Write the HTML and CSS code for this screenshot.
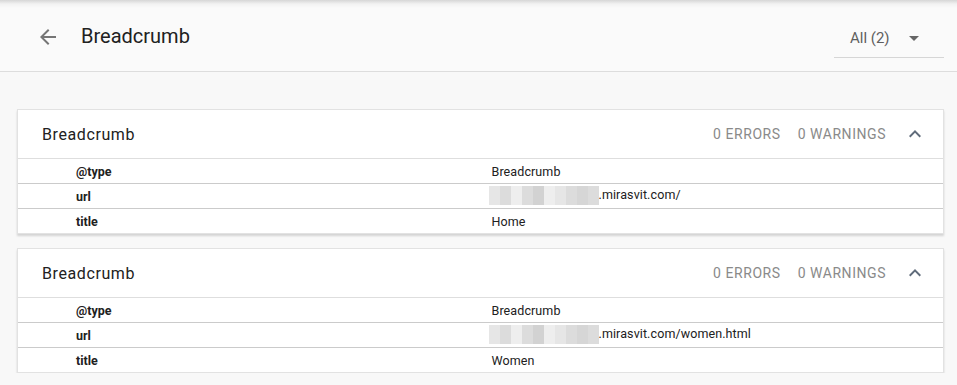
FILE: index.html
```html
<!DOCTYPE html>
<html lang="en">
<head>
    <meta charset="UTF-8">
    <title>Breadcrumb</title>
    <link rel="stylesheet" href="styles.css">
</head>
<body>
    <div class="topbar">
        <svg class="back" width="24" height="24" viewBox="0 0 24 24"><path d="M20 11H7.83l5.59-5.59L12 4l-8 8 8 8 1.41-1.41L7.83 13H20v-2z" fill="#757575"/></svg>
        <h1>Breadcrumb</h1>
        <div class="select">
            <span>All (2)</span>
            <span class="caret"></span>
        </div>
    </div>

    <div class="main">
        <div class="card">
            <div class="card-head">
                <div class="card-title">Breadcrumb</div>
                <div class="count">0 errors</div>
                <div class="count">0 warnings</div>
                <svg class="chev" width="24" height="24" viewBox="0 0 24 24"><path d="M7.41 15.41L12 10.83l4.59 4.58L18 14l-6-6-6 6z" fill="#5f6b7a"/></svg>
            </div>
            <div class="row"><div class="key">@type</div><div class="val">Breadcrumb</div></div>
            <div class="row"><div class="key">url</div><div class="val"><span class="blur"><i></i><i></i><i></i><i></i><i></i><i></i><i></i><i></i><i></i><i></i></span>.mirasvit.com/</div></div>
            <div class="row"><div class="key">title</div><div class="val">Home</div></div>
        </div>

        <div class="card">
            <div class="card-head">
                <div class="card-title">Breadcrumb</div>
                <div class="count">0 errors</div>
                <div class="count">0 warnings</div>
                <svg class="chev" width="24" height="24" viewBox="0 0 24 24"><path d="M7.41 15.41L12 10.83l4.59 4.58L18 14l-6-6-6 6z" fill="#5f6b7a"/></svg>
            </div>
            <div class="row"><div class="key">@type</div><div class="val">Breadcrumb</div></div>
            <div class="row"><div class="key">url</div><div class="val"><span class="blur"><i></i><i></i><i></i><i></i><i></i><i></i><i></i><i></i><i></i><i></i></span>.mirasvit.com/women.html</div></div>
            <div class="row"><div class="key">title</div><div class="val">Women</div></div>
        </div>
    </div>
</body>
</html>
```

FILE: styles.css
```css
body { margin: 0; font-family: Roboto, "Liberation Sans", sans-serif; background-color: #f8f8f8; color: #212121; }

.topbar {
    height: 71px;
    display: flex;
    align-items: center;
    padding: 0 13px 0 36px;
    background: linear-gradient(#d6d6d6, #f2f2f2 4px, #fafafa 8px);
    border-bottom: 1px solid #dddddd;
}
.back { margin-top: 2px; }
.topbar h1 { font-size: 20px; font-weight: 400; margin: 0 0 0 21px; flex: 1; color: #212121; }
.select {
    width: 110px;
    height: 32px;
    box-sizing: border-box;
    margin-top: 12px;
    padding: 0 0 0 16px;
    display: flex;
    align-items: center;
    border-bottom: 1px solid #d6d6d6;
    font-size: 15px;
    color: #5f5f5f;
}
.select span:first-child { flex: 1; margin-top: -6px; }
.caret {
    width: 0; height: 0;
    margin: -6px 25px 0 0;
    border-left: 5px solid transparent;
    border-right: 5px solid transparent;
    border-top: 5px solid #666;
}

.main { padding: 37px 13px 0 17px; display: flex; flex-direction: column; gap: 14px; }
.card {
    background-color: #fff;
    border: 1px solid #e2e2e2;
    box-shadow: 0 2px 2px rgba(0,0,0,0.15);
}
.card-head {
    height: 48px;
    display: flex;
    align-items: center;
    padding: 0 16px 0 24px;
    border-bottom: 1px solid #dedede;
}
.card-title { flex: 1; font-size: 16px; letter-spacing: 0.6px; color: #212121; }
.count { font-size: 14px; text-transform: uppercase; letter-spacing: 0.55px; color: #8a8a8a; margin-left: 17px; }
.chev { margin-left: 17px; }

.row {
    display: grid;
    grid-template-columns: 1fr 1fr;
    height: 24px;
    align-items: center;
    font-size: 12.5px;
    border-top: 1px solid #cbcbcb;
}
.row:nth-child(2) { border-top: none; }
.key { padding-left: 58px; font-weight: bold; }
.val { padding-left: 11px; letter-spacing: 0.1px; }
.blur { display: inline-flex; vertical-align: middle; height: 19px; margin: -2px 0 0 -3px; }
.blur i { width: 11px; height: 19px; background: #e6e6e6; }
.blur i:nth-child(2n) { background: #dcdcdc; }
.blur i:nth-child(3n) { background: #eeeeee; }
.blur i:nth-child(5) { background: #d2d2d2; }
.blur i:nth-child(9) { background: #d6d6d6; }
```
